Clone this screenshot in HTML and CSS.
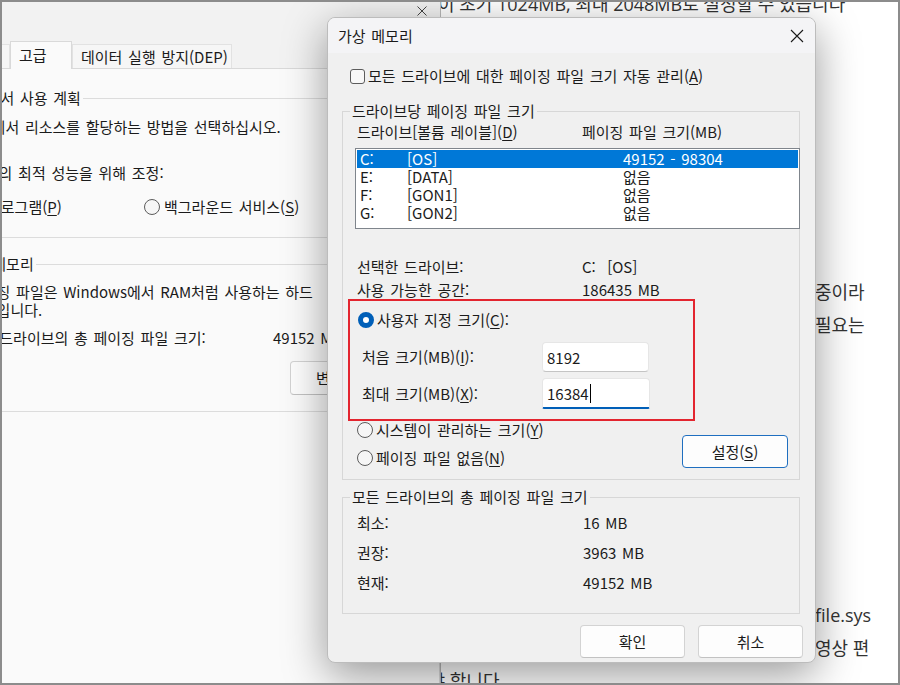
FILE: index.html
```
<!DOCTYPE html>
<html lang="ko">
<head>
    <meta charset="UTF-8">
    <title>가상 메모리</title>
    <link rel="stylesheet" href="styles.css">
</head>
<body>
<div class="screen">

    <!-- 뒤쪽 블로그 본문 -->
    <div class="page">
        <p class="intro">이 초기 1024MB, 최대 2048MB로 설정할 수 있습니다</p>
        <p class="para2">
            <span class="line tail">중이라</span>
            <span class="line tail">필요는</span>
        </p>
        <p class="para3">
            <span class="line tail">file.sys</span>
            <span class="line tail">영상 편</span>
            <span class="line cut">해야 합니다</span>
        </p>
    </div>

    <!-- 성능 옵션 창 (뒤) -->
    <div class="perf">
        <div class="perf-titlebar">
            <svg class="perf-close" width="10" height="10" viewBox="0 0 10 10"><path d="M0.5 0.5L9.5 9.5M9.5 0.5L0.5 9.5" stroke="#444" stroke-width="1"/></svg>
        </div>
        <div class="tabs">
            <div class="tab t1">시각 효과</div>
            <div class="tab t2 active">고급</div>
            <div class="tab t3">데이터 실행 방지(DEP)</div>
        </div>
        <div class="tab-panel">
            <div class="pgroup pg1">
                <div class="plegend">프로세서 사용 계획</div>
                <div class="pline first">프로세서 리소스를 할당하는 방법을 선택하십시오.</div>
                <div class="pline adjust">다음의 최적 성능을 위해 조정:</div>
                <div class="pradios">
                    <span class="pradio-item"><span class="radio"></span>프로그램(<u>P</u>)</span>
                    <span class="pradio-item"><span class="radio"></span>백그라운드 서비스(<u>S</u>)</span>
                </div>
            </div>
            <div class="pgroup pg2">
                <div class="plegend">가상 메모리</div>
                <div class="pdesc">페이징 파일은 Windows에서 RAM처럼 사용하는 하드<br>영역입니다.</div>
                <div class="ptotal"><span class="ptotal-k">모든 드라이브의 총 페이징 파일 크기:</span><span>49152 MB</span></div>
                <button class="btn pchange">변경(<u>C</u>)...</button>
            </div>
        </div>
    </div>

    <!-- 가상 메모리 대화 상자 -->
    <div class="vm">
        <div class="vm-title">
            <span>가상 메모리</span>
            <svg class="vm-close" width="14" height="14" viewBox="0 0 14 14"><path d="M1 1L13 13M13 1L1 13" stroke="#1a1a1a" stroke-width="1.1"/></svg>
        </div>
        <div class="vm-body">
            <div class="check-row"><span class="checkbox"></span>모든 드라이브에 대한 페이징 파일 크기 자동 관리(<u>A</u>)</div>

            <div class="group g-drive">
                <div class="legend">드라이브당 페이징 파일 크기</div>
                <div class="list-head">
                    <span class="c-head">드라이브[볼륨 레이블](<u>D</u>)</span>
                    <span>페이징 파일 크기(MB)</span>
                </div>
                <div class="listbox">
                    <div class="row sel"><span class="c-letter">C:</span><span class="c-label">[OS]</span><span>49152 - 98304</span></div>
                    <div class="row"><span class="c-letter">E:</span><span class="c-label">[DATA]</span><span>없음</span></div>
                    <div class="row"><span class="c-letter">F:</span><span class="c-label">[GON1]</span><span>없음</span></div>
                    <div class="row"><span class="c-letter">G:</span><span class="c-label">[GON2]</span><span>없음</span></div>
                </div>
                <div class="info">
                    <div class="kv"><span class="k">선택한 드라이브:</span><span>C:&nbsp;&nbsp;[OS]</span></div>
                    <div class="kv"><span class="k">사용 가능한 공간:</span><span>186435 MB</span></div>
                </div>
                <div class="highlight">
                    <div class="radio-row"><span class="radio on"></span>사용자 지정 크기(<u>C</u>):</div>
                    <div class="field">
                        <span class="field-label">처음 크기(MB)(<u>I</u>):</span>
                        <div class="input">8192</div>
                    </div>
                    <div class="field">
                        <span class="field-label">최대 크기(MB)(<u>X</u>):</span>
                        <div class="input focus">16384<span class="caret"></span></div>
                    </div>
                </div>
                <div class="opts">
                    <div class="opts-radios">
                        <div class="radio-row"><span class="radio"></span>시스템이 관리하는 크기(<u>Y</u>)</div>
                        <div class="radio-row"><span class="radio"></span>페이징 파일 없음(<u>N</u>)</div>
                    </div>
                    <button class="btn set">설정(<u>S</u>)</button>
                </div>
            </div>

            <div class="group g-total">
                <div class="legend">모든 드라이브의 총 페이징 파일 크기</div>
                <div class="totals">
                    <div class="kv"><span class="k">최소:</span><span>16 MB</span></div>
                    <div class="kv"><span class="k">권장:</span><span>3963 MB</span></div>
                    <div class="kv"><span class="k">현재:</span><span>49152 MB</span></div>
                </div>
            </div>

            <div class="vm-buttons">
                <button class="btn">확인</button>
                <button class="btn">취소</button>
            </div>
        </div>
    </div>

</div>
</body>
</html>
```

FILE: styles.css
```
body {
    margin: 0;
    font-family: "Noto Sans CJK KR", sans-serif;
}

.screen {
    position: relative;
    width: 900px;
    height: 685px;
    overflow: hidden;
    background: #fff;
}

/* 캡처 테두리 */
.screen::after {
    content: "";
    position: absolute;
    inset: 0;
    border: 2px solid #8c8c8c;
    pointer-events: none;
    z-index: 5;
}

/* ---------- 블로그 본문 ---------- */
.page {
    position: absolute;
    inset: 0;
    padding-left: 438px;
    font-family: "Open Sans", "Noto Sans CJK KR", sans-serif;
    font-size: 18px;
    line-height: 33px;
    color: #333;
}

.page p {
    margin: 0;
}

.page .line {
    display: block;
    white-space: nowrap;
}

.page .intro {
    margin-top: -12px;
    white-space: nowrap;
}

.page .para2 {
    margin-top: 255px;
}

.page .para3 {
    margin-top: 257px;
}

.page .tail {
    padding-left: 377px;
}

.page .cut {
    margin-left: -26px;
}

/* ---------- 성능 옵션 창 ---------- */
.perf {
    position: absolute;
    left: -80px;
    top: 0;
    width: 520px;
    height: 700px;
    background: #f2f2f2;
    border-right: 1px solid #b9b9b9;
    font-size: 15px;
    word-spacing: 1.5px;
    color: #1b1b1b;
}

.perf-titlebar {
    height: 32px;
    display: flex;
    justify-content: flex-end;
    align-items: flex-start;
    padding: 6px 13px 0 0;
    box-sizing: border-box;
}

.tabs {
    height: 36px;
    display: flex;
    align-items: flex-end;
    padding-left: 7px;
}

.tab {
    height: 24px;
    line-height: 23px;
    box-sizing: border-box;
    padding-left: 8px;
    background: #f6f6f6;
    border: 1px solid #e2e2e2;
    border-bottom: none;
    white-space: nowrap;
    overflow: hidden;
}

.tab.t1 { width: 83px; }
.tab.t2 { width: 62px; }
.tab.t3 { width: 160px; }

.tab.active {
    height: 28px;
    line-height: 26px;
    background: #fafafa;
    border-color: #d9d9d9;
    margin-bottom: -1px;
    position: relative;
    z-index: 1;
}

.tab-panel {
    margin: 0 0 0 7px;
    height: 640px;
    background: #fafafa;
    border: 1px solid #d9d9d9;
    padding-top: 29px;
    box-sizing: border-box;
}

.pgroup {
    margin-left: 22px;
    width: 520px;
    border: 1px solid #dcdcdc;
    line-height: 20px;
}

.plegend {
    width: max-content;
    margin: -11px 0 0 6px;
    padding: 0 2px;
    background: #fafafa;
    line-height: 20px;
}

.pline {
    padding-left: 13px;
}

.pline.first {
    margin-top: 9px;
}

.pline.adjust {
    margin-top: 26px;
    padding-left: 20px;
}

.pradios {
    margin-top: 14px;
    padding: 0 0 20px 16px;
    display: flex;
    align-items: center;
}

.pradio-item {
    display: flex;
    align-items: center;
}

.pradio-item:first-child {
    width: 177px;
}

.pg2 {
    margin-top: 26px;
    padding-bottom: 16px;
}

.pdesc {
    margin-top: 9px;
    padding-left: 18px;
    line-height: 18px;
}

.ptotal {
    margin-top: 9px;
    padding-left: 15px;
    display: flex;
}

.ptotal-k {
    width: 307px;
}

.btn.pchange {
    margin: 13px 0 0 339px;
    width: 112px;
    height: 34px;
}

/* ---------- 공통 컨트롤 ---------- */
.radio {
    width: 16px;
    height: 16px;
    box-sizing: border-box;
    border-radius: 50%;
    border: 1px solid #5c5c5c;
    background: #f6f6f6;
    margin-right: 4px;
    flex: none;
}

.radio.on {
    border: 5px solid #005fb8;
    background: #fff;
}

.btn {
    font: inherit;
    color: #1b1b1b;
    background: #fdfdfd;
    border: 1px solid #d3d3d3;
    border-bottom-color: #c2c2c2;
    border-radius: 4px;
    padding: 0;
    display: block;
}

u {
    text-decoration-thickness: 1px;
    text-underline-offset: 2px;
}

/* ---------- 가상 메모리 대화 상자 ---------- */
.vm {
    position: absolute;
    left: 327px;
    top: 17px;
    width: 489px;
    height: 646px;
    box-sizing: border-box;
    border: 1px solid #bcbcbc;
    border-radius: 8px;
    background: #f0f0f0;
    box-shadow: 0 12px 44px rgba(0, 0, 0, 0.4);
    overflow: hidden;
    z-index: 2;
    font-size: 15px;
    word-spacing: 1.5px;
    color: #1b1b1b;
}

.vm-title {
    height: 35px;
    background: #f4f4f6;
    display: flex;
    align-items: center;
    justify-content: space-between;
    padding: 0 11px 0 10px;
}

.vm-close {
    display: block;
}

.vm-body {
    padding: 0 15px 0 14px;
}

.check-row {
    margin-top: 13px;
    height: 20px;
    line-height: 20px;
    padding-left: 8px;
    display: flex;
    align-items: center;
}

.checkbox {
    width: 15px;
    height: 15px;
    box-sizing: border-box;
    border: 1px solid #5c5c5c;
    border-radius: 3px;
    background: #f8f8f8;
    margin-right: 3px;
}

.group {
    border: 1px solid #d7d7d7;
    line-height: 20px;
}

.legend {
    width: max-content;
    margin: -11px 0 0 7px;
    padding: 0 2px;
    background: #f0f0f0;
}

.g-drive {
    margin-top: 25px;
    padding-bottom: 11px;
}

.list-head {
    margin-top: 1px;
    padding-left: 14px;
    display: flex;
}

.c-head {
    width: 225px;
}

.listbox {
    margin: 6px -1px 0 12px;
    height: 81px;
    box-sizing: border-box;
    border: 1px solid #7f858c;
    background: #fff;
    padding: 1px;
}

.row {
    height: 18px;
    line-height: 18px;
    padding-left: 3px;
    display: flex;
}

.row.sel {
    background: #0078d7;
    color: #fff;
}

.c-letter { width: 47px; }
.c-label { width: 216px; }

.info {
    margin-top: 26px;
}

.kv {
    display: flex;
    padding-left: 14px;
}

.k {
    width: 225px;
}

.info .kv {
    line-height: 23px;
}

.highlight {
    position: relative;
    z-index: 1;
    margin: -2px 0 0 5px;
    width: 347px;
    box-sizing: border-box;
    border: 2px solid #e3252f;
    padding-bottom: 10px;
}

.radio-row {
    display: flex;
    align-items: center;
    height: 20px;
}

.highlight .radio-row {
    margin-top: 9px;
    padding-left: 8px;
}

.radio-row .radio {
    margin-right: 3px;
}

.field {
    display: flex;
    align-items: center;
    padding-left: 12px;
    margin-top: 12px;
}

.field + .field {
    margin-top: 6px;
}

.field-label {
    width: 180px;
}

.input {
    width: 107px;
    height: 30px;
    line-height: 29px;
    box-sizing: border-box;
    padding-left: 4px;
    background: #fff;
    border: 1px solid #e6e6e6;
    border-bottom-color: #c4c4c4;
    border-radius: 4px;
    display: flex;
    align-items: center;
}

.input.focus {
    width: 108px;
    height: 31px;
    border-bottom: 2px solid #005fb8;
    border-radius: 4px 4px 2px 2px;
}

.caret {
    width: 1px;
    height: 19px;
    background: #000;
    margin-left: 1px;
}

.opts {
    display: flex;
    justify-content: space-between;
    align-items: flex-end;
    margin-top: -1px;
}

.opts-radios {
    padding-left: 14px;
    display: flex;
    flex-direction: column;
    gap: 8px;
}

.btn.set {
    width: 106px;
    height: 33px;
    margin-right: 11px;
    border: 1px solid #1f6fc0;
}

.g-total {
    margin-top: 17px;
    padding-bottom: 15px;
}

.totals {
    margin-top: 1px;
}

.totals .kv {
    line-height: 30px;
}

.totals .k {
    width: 226px;
}

.vm-buttons {
    margin: 11px -3px 0 0;
    display: flex;
    justify-content: flex-end;
    gap: 13px;
}

.vm-buttons .btn {
    width: 105px;
    height: 33px;
}
```
